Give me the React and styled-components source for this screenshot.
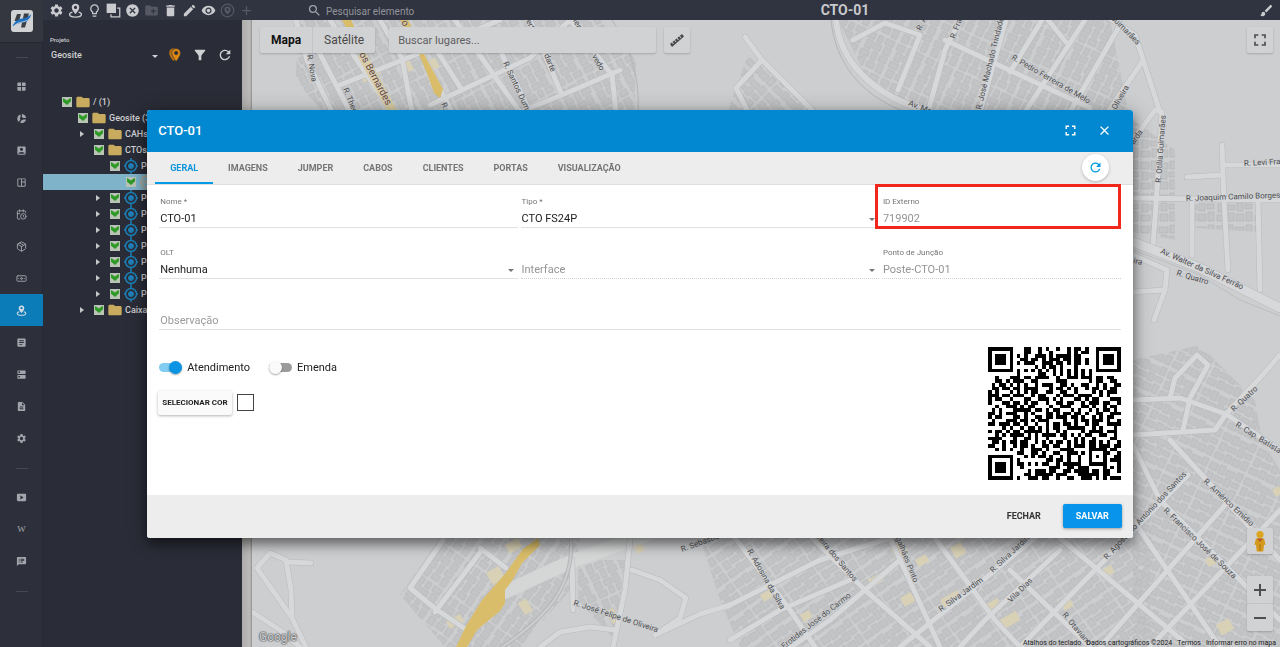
import React, { useState } from 'react'
import styled, { createGlobalStyle, css } from 'styled-components'
import {
  MdSettings,
  MdLightbulbOutline,
  MdCancel,
  MdCreateNewFolder,
  MdDelete,
  MdEdit,
  MdVisibility,
  MdAdd,
  MdSearch,
  MdBrush,
  MdWindow,
  MdAccountBox,
  MdOutlineSpaceDashboard,
  MdArticle,
  MdDns,
  MdDescription,
  MdSmartDisplay,
  MdSpeakerNotes,
  MdFilterAlt,
  MdRefresh,
  MdFullscreen,
  MdClose,
  MdFolder,
} from 'react-icons/md'
import { LuCalendarClock, LuPackage, LuBanknote } from 'react-icons/lu'

const GlobalStyle = createGlobalStyle`
  * {
    box-sizing: border-box;
  }
  body {
    margin: 0;
    background: #2b2d38;
    font-family: Roboto, "Liberation Sans", sans-serif;
  }
  button, input, select {
    font-family: inherit;
    margin: 0;
  }
  button {
    border: 0;
    padding: 0;
    background: none;
    color: inherit;
    cursor: pointer;
  }
`

/* ---------- icons ---------- */

const PinAreaIcon = ({ size = 15 }) => (
  <svg width={size} height={size} viewBox='0 0 24 24' fill='currentColor'>
    <path
      fillRule='evenodd'
      d='M12 1a6 6 0 0 0-6 6c0 4.300 6 10.500 6 10.500S18 11.300 18 7a6 6 0 0 0-6-6zm0 3.500a2.500 2.500 0 1 1 0 5 2.500 2.500 0 0 1 0-5z'
    />
    <path
      d='M7 14.500c-3 .8-4.500 2-4.500 3.500C2.500 20.500 6.500 22.500 12 22.500s9.500-2 9.500-4.500c0-1.500-1.500-2.700-4.500-3.500'
      fill='none'
      stroke='currentColor'
      strokeWidth='2.200'
    />
  </svg>
)

const CopyIcon = () => (
  <svg width='15' height='15' viewBox='0 0 24 24' fill='currentColor'>
    <path d='M1 1h15v15H1z' />
    <path d='M18 7h5v16H7v-5h2v3h12V9h-3z' />
  </svg>
)

const TargetPinIcon = () => (
  <svg width='15' height='15' viewBox='0 0 24 24'>
    <circle cx='12' cy='12' r='10' fill='none' stroke='currentColor' strokeWidth='2' />
    <path
      fill='currentColor'
      fillRule='evenodd'
      d='M12 5.500a5 5 0 0 0-5 5c0 3.500 5 8 5 8s5-4.500 5-8a5 5 0 0 0-5-5zm0 3a2 2 0 1 1 0 4 2 2 0 0 1 0-4z'
    />
  </svg>
)

const PieIcon = () => (
  <svg width='11' height='11' viewBox='0 0 24 24' fill='currentColor'>
    <path d='M10 3v6.500a3 3 0 0 0-.5 4.800L6 19.500A9.500 9.500 0 0 1 10 3z' />
    <path d='M13 2a10 10 0 0 1 9 9h-6.500A3.500 3.500 0 0 0 13 8.500z' />
    <path d='M15.500 14H22a9.500 9.500 0 0 1-13 7l3.500-5.500a3.500 3.500 0 0 0 3-1.500z' />
  </svg>
)

const Logo = () => (
  <svg width='22' height='22' viewBox='0 0 22 22'>
    <rect width='22' height='22' rx='3' fill='#d2d3d5' />
    <path d='M6 4h4l-2 7H3.500z M13 3.500h5l-4 14h-4z' fill='#3c4047' />
    <path d='M1.500 16.500c2-5 5-7.500 10-8 4-.5 6.500-2 8.500-4.500-.5 5-3.500 8-8 8.500-4 .5-7.500 1.500-10.500 4z' fill='#1d6fc0' />
    <path d='M2 17c3-3.500 6-4.700 10-5.200 3.500-.5 5.500-1.800 7-3.800' fill='none' stroke='#d2d3d5' strokeWidth='.8' />
  </svg>
)

const OrangePins = () => (
  <svg width='14' height='14' viewBox='0 0 24 24'>
    <path d='M9 1C4.500 1 2 4.500 2 8.500 2 14 9 22 9 22l3-1-4-8V5l4-4z' fill='#b86f14' />
    <path
      fillRule='evenodd'
      fill='#e08a14'
      stroke='#2a2c37'
      d='M14 1a7.500 7.500 0 0 0-7.500 7.500C6.500 14 14 23 14 23s7.500-9 7.500-14.500A7.500 7.500 0 0 0 14 1zm0 4.500a3 3 0 1 1 0 6 3 3 0 0 1 0-6z'
    />
  </svg>
)

const PoleIcon = () => (
  <svg width='16' height='16' viewBox='0 0 16 16' stroke='#1d7fb5' fill='none'>
    <path d='M8 0v3M8 13v3M1 8h2M13 8h2' strokeWidth='1.500' />
    <circle cx='8' cy='8' r='5.500' strokeWidth='1.500' />
    <circle cx='8' cy='8' r='2.500' fill='#1d7fb5' />
  </svg>
)

const BoxIcon = () => (
  <svg width='16' height='16' viewBox='0 0 16 16' fill='none' stroke='#b9a58c'>
    <circle cx='8' cy='8' r='6' strokeWidth='1.500' />
    <path d='M4 8h8' strokeWidth='1.500' />
  </svg>
)

const RulerIcon = () => (
  <svg width='16' height='16' viewBox='0 0 16 16'>
    <path d='M1 12 13 2l2 2.500L3 15z' fill='#4a4a4a' />
    <path d='M3 10l1.500 2M5.500 8 7 10M8 6l1.500 2M10.500 4 12 6' stroke='#cfd0d1' />
  </svg>
)

const ZoomInIcon = () => (
  <svg width='12' height='12' viewBox='0 0 12 12' stroke='currentColor' strokeWidth='2'>
    <path d='M0 6h12M6 0v12' />
  </svg>
)

const ZoomOutIcon = () => (
  <svg width='12' height='12' viewBox='0 0 12 12' stroke='currentColor' strokeWidth='2'>
    <path d='M0 6h12' />
  </svg>
)

const Pegman = () => (
  <svg width='12' height='22' viewBox='0 0 12 22'>
    <path d='M2 8.500h8l1.500 6-1.500.5-.8 6.500H2.800L2 15l-1.500-.5z' fill='#d59a1c' />
    <path d='M3 8.500h6L6 12z' fill='#b5532a' />
    <circle cx='6' cy='4.500' r='3.600' fill='#dba520' />
    <path d='M6 14v7' stroke='#a87412' />
  </svg>
)

/* ---------- QR code ---------- */

const QR_ROWS = [
  '#######...##..#.#..#..#.##.#..#######',
  '#.....#...##..#..#....#.#.##..#.....#',
  '#.###.#.#.#..###.#.####.##....#.###.#',
  '#.###.#..##.##.#.###.##.##.#..#.###.#',
  '#.###.#.#.###..###.##.#.##.#..#.###.#',
  '#.....#......#.#.##.#...#.....#.....#',
  '#######.#.#.#.#.#.#.#.#.#.#.#.#######',
  '........#.....##..#.#.#.#.#.#........',
  '..#...###.##.####..#..###.###.##.##..',
  '..##.#.###..##.....###......#.##..##.',
  '.#.##.#.#.#..#.###..##.#..##..#.#..##',
  '.##.##.##.####...#.##.#.#..#.##.#.##.',
  '#.#...#.#.#.##..##..##..#....#.#.###.',
  '###.##.###..#.##...#.###.####..#.#...',
  '#.##..#...##..###.#.#...##.#.##...###',
  '#...##.##.#.##..#..##.##..#.###.##..#',
  '..#..###.#.##....#..###...##.#..#.##.',
  '.#.#...#####.##.#.##...#.#..#.#.##.#.',
  '##.#.###..#.#...##.#.##.##.#..##..###',
  '#.##...##.#..##.##.###.##.#..#.#.##..',
  '.#...###.##.#.###....#..#.##.###.#..#',
  '##.###.##.#..#..#.##.##.#..#.##..####',
  '....#.#..#.##.#.#.##..#####..#.#...#.',
  '#.##.#.##.#####.#..#.#....#.####.###.',
  '..#.#.####.#.#.####.##.#.#.##..##..#.',
  '####...#..##.#..#....#..#.#..#....##.',
  '.##.#.##.##..#.#.#.##.#.#.#.##.#.#..#',
  '##..#..#.##.#..##.##..#.###.##.###.##',
  '..#.#.#..#..###.#...####....#####.##.',
  '........##..##.#..##..###.#.#...##..#',
  '#######...#.#.##.#..#.#..#..#.#.#..##',
  '#.....#.#.......##.##.#..#..#...#.###',
  '#.###.#.##.#.#.##..#.#####..#####...#',
  '#.###.#..#.......###..##.###....#.#.#',
  '#.###.#....#.###.##..##.####.##.##..#',
  '#.....#...##.#####.###...######.##...',
  '#######.#..###.##..#..##..###.#.#.###',
]

const QrCode = () => (
  <QrSvg viewBox='0 0 37 37' shapeRendering='crispEdges' role='img' aria-label='QR code'>
    {QR_ROWS.map((row, y) =>
      row.split('').map((cell, x) => cell === '#' && <rect key={`${x}-${y}`} x={x} y={y} width='1' height='1' />)
    )}
  </QrSvg>
)

/* ---------- map ---------- */

const DISTRICTS = [
  { angle: 62, points: '300,20 600,20 636,60 634,120 330,120 295,80' },
  { angle: -65, points: '838,20 1110,20 1130,120 935,120 870,84' },
  { angle: 45, points: '748,55 830,120 725,120 735,90' },
  { angle: 0, points: '1133,120 1175,150 1175,240 1133,232' },
  { angle: 0, points: '1195,203 1256,203 1258,232 1195,228' },
  { angle: 25, points: '1133,360 1200,345 1255,400 1262,440 1280,470 1280,647 1133,647' },
  { angle: -55, points: '440,538 580,538 570,590 520,647 445,647 400,595' },
  { angle: -35, points: '700,538 1150,538 1150,647 740,647 720,600' },
  { angle: 65, points: '578,560 625,560 615,640 578,600' },
]

const ROADS = [
  'M296 20 307 60 332 112',
  'M318 50 350 112',
  'M330 20 392 112',
  'M380 20 402 58 412 112',
  'M404 20 446 100 452 112',
  'M430 40 462 90',
  'M340 85 420 53 500 20',
  'M430 105 530 58 570 20',
  'M455 20 520 112',
  'M500 50 530 112',
  'M530 20 562 95 620 70',
  'M570 20 612 75 616 112',
  'M562 95 520 112',
  'M853 40 885 23 920 35 898 90',
  'M745 37 762 60 814 112',
  'M762 60 736 88 748 112',
  'M960 20 945 50 928 112',
  'M1006 20 980 112',
  'M945 40 1090 108',
  'M1042 20 1010 72',
  'M1085 20 1025 112',
  'M1120 25 1070 112',
  'M1048 20 1066 42',
  'M1100 12 1135 35 1160 112',
  'M1142 62 1108 112',
  'M1133 140 1155 110 1162 112 1156 205 1153 245',
  'M1222 145 1224 200 1228 270',
  'M1187 177 1222 175',
  'M1225 165 1280 165',
  'M1133 198 1280 200',
  'M1192 200 1192 255',
  'M1258 200 1260 290',
  'M1133 255 1167 270 1165 290 1154 320',
  'M1133 292 1165 290',
  'M1133 400 1180 398 1226 414 1280 450',
  'M1170 398 1175 378 1197 355 1208 365 1190 398 1183 430',
  'M1133 435 1215 430 1226 414 1258 380 1280 355',
  'M1133 445 1160 500 1280 620',
  'M1170 440 1280 560',
  'M1188 475 1090 575 1020 647',
  'M1225 505 1100 647',
  'M1280 510 1150 647',
  'M1060 538 1190 647',
  'M1133 520 1220 647',
  'M1035 538 940 615 900 647',
  'M1060 550 985 620 960 647',
  'M890 538 940 647',
  'M935 538 995 620 1020 647',
  'M1010 570 1090 647',
  'M812 538 865 590 930 647',
  'M735 538 790 610 815 647',
  'M730 605 820 560 890 538',
  'M900 560 830 620 780 655',
  'M730 640 780 610 850 580',
  'M443 540 410 588 437 610 470 632',
  'M482 550 435 612',
  'M480 548 506 568',
  'M630 540 625 590 613 647',
  'M632 570 660 580 686 598 680 618 655 635',
  'M655 635 700 614 730 605',
  'M540 647 560 632 590 627 615 630',
  'M572 560 573 610',
  'M257 568 270 553 286 560 291 590 292 618 306 647',
  'M257 568 290 615',
  'M288 562 311 563',
  'M252 612 280 630 300 647',
]

const YELLOW_LOTS = [
  [360, 76, 20, 8], [402, 60, 6, 14], [427, 62, 9, 10], [505, 545, 14, 10], [486, 573, 14, 14],
  [518, 603, 9, 14], [606, 612, 8, 14], [446, 622, 16, 8], [634, 547, 8, 8], [890, 548, 14, 14],
  [915, 560, 12, 8], [950, 548, 12, 12], [868, 580, 12, 8], [940, 600, 20, 10], [985, 605, 14, 12],
  [1000, 620, 18, 10], [1060, 602, 10, 10], [1102, 570, 10, 8], [1205, 560, 10, 8], [1216, 625, 14, 12],
  [800, 615, 10, 8], [760, 595, 10, 8], [900, 598, 12, 10], [1272, 490, 8, 8],
]

const LABELS = [
  [307, 55, 80, 'R. Nova'],
  [343, 89, 68, 'R. Theo'],
  [503, 63, 65, 'R. Santos Dumont'],
  [544, 55, 68, 'darte'],
  [592, 56, 62, 'vedo'],
  [526, 21, 65, 'ert'],
  [573, 20, 65, 'ter'],
  [441, 104, 65, 'R. Ipê'],
  [921, 31, -65, 'R. A'],
  [955, 39, -70, 'R. Franco'],
  [981, 110, -76, 'R. José Machado Trindade'],
  [1011, 59, 30, 'R. Pedro Ferreira de Melo'],
  [1110, 18, 45, 'Guimarães'],
  [1116, 110, -60, 'Oliveira'],
  [908, 105, 22, 'Av. Manoel'],
  [1134, 145, -55, 'arda'],
  [1161, 183, -86, 'R. Otília Guimarães'],
  [1244, 166, -3, 'R. Levi Franco'],
  [1186, 201, -2, 'R. Joaquim Camilo Borges'],
  [1160, 253, 24, 'Av. Walter da Silva Ferrão'],
  [1133, 263, 12, 'ira'],
  [1176, 275, 17, 'R. Quatro'],
  [1234, 412, -43, 'R. Quatro'],
  [1235, 426, 32, 'R. Cap. Batista'],
  [1203, 482, 43, 'R. Américo Emídio'],
  [1163, 511, 44, 'R. Francisco José de Souza'],
  [1107, 560, -47, 'R. Agostinho Antônio dos Santos'],
  [993, 573, -43, 'R. Silva Jardim'],
  [941, 612, -36, 'R. Silva Jardim'],
  [1011, 603, -45, 'Vila Dias'],
  [1062, 615, 50, 'R. Otaviano'],
  [894, 534, 68, 'agalhães Pinto'],
  [815, 536, 50, 'rreira dos Santos'],
  [747, 551, 60, 'R. Adosina da Silva'],
  [784, 649, -38, 'Erotides José do Carmo'],
  [682, 552, -20, 'R. Sebastião'],
  [573, 605, 18, 'R. José Felipe de Oliveira'],
]

const MapDrawing = () => (
  <MapSvg viewBox='252 20 1028 627' preserveAspectRatio='xMinYMin slice' aria-hidden='true'>
    <defs>
      {DISTRICTS.map(({ angle }, i) => (
        <pattern
          key={i}
          id={`lots-${i}`}
          width='38'
          height='32'
          patternUnits='userSpaceOnUse'
          patternTransform={`rotate(${angle})`}
        >
          <g fill='#c3c4c6' stroke='#b3b4b7' strokeWidth='.7'>
            <path d='M1 2h8v7H1zM11 1h6v9h-6zM19 3h9v6h-9zM30 1h6v8h-6z' />
            <path d='M2 12h6v8H2zM10 13h9v5h-9zM21 11h6v8h-6zM29 12h7v5h-7z' />
            <path d='M1 23h9v6H1zM12 21h6v8h-6zM20 22h8v7h-8zM30 20h6v9h-6z' />
          </g>
        </pattern>
      ))}
    </defs>
    <rect x='252' y='20' width='1028' height='627' fill='#cdced0' />
    {DISTRICTS.map(({ points }, i) => (
      <polygon key={i} points={points} fill={`url(#lots-${i})`} />
    ))}
    {YELLOW_LOTS.map(([x, y, w, h], i) => (
      <rect key={i} x={x} y={y} width={w} height={h} fill='#d9d1b6' transform={`rotate(-30 ${x} ${y})`} />
    ))}
    <g fill='none' strokeLinejoin='round' strokeLinecap='round'>
      <path d='M505 592 570 562 660 530' stroke='#d5d6d6' strokeWidth='14' />
      {ROADS.map((d) => (
        <path key={d} d={d} stroke='#b9babd' strokeWidth='6' />
      ))}
      {ROADS.map((d) => (
        <path key={d} d={d} stroke='#d7d8da' strokeWidth='5' />
      ))}
      <path d='M1133 242 1200 268 1280 308' stroke='#b9babd' strokeWidth='10' />
      <path d='M1133 242 1200 268 1280 308' stroke='#d7d8da' strokeWidth='9' />
      <path d='M1133 250 1200 275 1240 300 1280 316' stroke='#bdbec1' />
      <path d='M836 20C840 60 870 95 930 112' stroke='#b9babd' strokeWidth='7' />
      <path d='M836 20C840 60 870 95 930 112' stroke='#d7d8da' strokeWidth='6' />
      <path d='M831 20C835 62 860 95 905 112M612 20C632 50 640 80 638 112' stroke='#b4b5b8' />
      <path d='M571 538C574 585 550 615 502 647' stroke='#b4b5b8' strokeWidth='4' />
      <path d='M571 538C574 585 550 615 502 647' stroke='#cdced0' strokeWidth='2' />
    </g>
    <g fill='#d9bd6a'>
      <path d='M342 20h9l4 8-6 5z' />
      <path d='M400 20h8l7 12-6 3z' />
      <path d='M419 54 424 54 438 80 443 89 440 98 434 93 428 76z' />
      <path d='M538 538 523 549 505 574 482 600 466 626 456 647 467 647 477 630 500 611 505 603 505 590 512 581 522 563 540 545z' />
    </g>
    <path d='M362 55 396 118' stroke='#d8cda4' strokeWidth='9' />
    <MajorLabel x='359' y='54' transform='rotate(62 359 54)'>os Bernardes</MajorLabel>
    <MajorLabel x='401' y='22' transform='rotate(62 401 22)'>o Pro</MajorLabel>
    {LABELS.map(([x, y, angle, text], i) => (
      <StreetLabel key={i} x={x} y={y} transform={`rotate(${angle} ${x} ${y})`}>
        {text}
      </StreetLabel>
    ))}
  </MapSvg>
)

/* ---------- page data ---------- */

const TOOLS = [
  { name: 'Configurar', icon: <MdSettings /> },
  { name: 'Adicionar ponto', icon: <PinAreaIcon /> },
  { name: 'Dica', icon: <MdLightbulbOutline /> },
  { name: 'Copiar', icon: <CopyIcon /> },
  { name: 'Cancelar', icon: <MdCancel /> },
  { name: 'Nova pasta', icon: <MdCreateNewFolder />, dim: true },
  { name: 'Excluir', icon: <MdDelete /> },
  { name: 'Editar', icon: <MdEdit /> },
  { name: 'Visualizar', icon: <MdVisibility /> },
  { name: 'Centralizar', icon: <TargetPinIcon />, dim: true },
  { name: 'Adicionar', icon: <MdAdd />, dim: true },
]

const WikiMark = styled.span`
  font-family: 'Liberation Serif', serif;
  font-size: 9px;
`

const MENU = [
  [
    { name: 'Painel', icon: <MdWindow /> },
    { name: 'Relatórios', icon: <PieIcon /> },
    { name: 'Clientes', icon: <MdAccountBox /> },
    { name: 'Quadros', icon: <MdOutlineSpaceDashboard /> },
    { name: 'Agenda', icon: <LuCalendarClock /> },
    { name: 'Estoque', icon: <LuPackage /> },
    { name: 'Financeiro', icon: <LuBanknote /> },
    { name: 'Mapeamento', icon: <PinAreaIcon size={11} />, active: true },
    { name: 'Listas', icon: <MdArticle /> },
    { name: 'Rede', icon: <MdDns /> },
    { name: 'Documentos', icon: <MdDescription /> },
    { name: 'Configurações', icon: <MdSettings /> },
  ],
  [
    { name: 'Vídeos', icon: <MdSmartDisplay /> },
    { name: 'Wiki', icon: <WikiMark>W</WikiMark> },
    { name: 'Suporte', icon: <MdSpeakerNotes /> },
  ],
]

const pole = { level: 3, icon: 'pole', label: 'Poste', arrow: true }

const TREE = [
  { level: 0, icon: 'folder', label: '/ (1)' },
  { level: 1, icon: 'folder', label: 'Geosite (3)' },
  { level: 2, icon: 'folder', label: 'CAHs', arrow: true },
  { level: 2, icon: 'folder', label: 'CTOs' },
  { ...pole, arrow: false },
  { level: 4, icon: 'box', label: 'CTO-01', selected: true },
  pole,
  pole,
  pole,
  pole,
  pole,
  pole,
  pole,
  { level: 2, icon: 'folder', label: 'Caixas', arrow: true },
]

const TREE_ICONS = {
  folder: <MdFolder size={16} color='#c9ab5f' />,
  pole: <PoleIcon />,
  box: <BoxIcon />,
}

const TABS = ['Geral', 'Imagens', 'Jumper', 'Cabos', 'Clientes', 'Portas', 'Visualização']

/* ---------- components ---------- */

const SideMenu = () => (
  <Side>
    <LogoBox>
      <Logo />
    </LogoBox>
    {MENU.map((group, i) => (
      <React.Fragment key={i}>
        <MenuDivider />
        {group.map(({ name, icon, active }) => (
          <MenuItem key={name} href='#' aria-label={name} $active={active}>
            {icon}
          </MenuItem>
        ))}
      </React.Fragment>
    ))}
    <MenuDivider />
  </Side>
)

const TopBar = () => (
  <Bar>
    {TOOLS.map(({ name, icon, dim }) => (
      <ToolButton key={name} aria-label={name} $dim={dim}>
        {icon}
      </ToolButton>
    ))}
    <ElementSearch>
      <MdSearch size={15} />
      <input placeholder='Pesquisar elemento' aria-label='Pesquisar elemento' />
    </ElementSearch>
    <BarTitle>CTO-01</BarTitle>
    <ToolButton aria-label='Limpar'>
      <MdBrush />
    </ToolButton>
  </Bar>
)

const ProjectPanel = () => (
  <Panel>
    <ProjectLabel htmlFor='project'>Projeto</ProjectLabel>
    <ProjectRow>
      <SelectBox $light>
        <ProjectSelect id='project'>
          <option>Geosite</option>
        </ProjectSelect>
      </SelectBox>
      <PanelButton aria-label='Marcadores'>
        <OrangePins />
      </PanelButton>
      <PanelButton aria-label='Filtrar'>
        <MdFilterAlt />
      </PanelButton>
      <PanelButton aria-label='Atualizar árvore'>
        <MdRefresh />
      </PanelButton>
    </ProjectRow>
    <Tree>
      {TREE.map(({ level, icon, label, arrow, selected }, i) => (
        <TreeRow key={i} $level={level} $selected={selected}>
          <Arrow $open={arrow} />
          <TreeCheck type='checkbox' defaultChecked aria-label={label} />
          {TREE_ICONS[icon]}
          <span>{label}</span>
        </TreeRow>
      ))}
    </Tree>
  </Panel>
)

const MapView = () => (
  <MapArea>
    <MapDrawing />
    <MapTop>
      <MapTypes>
        <MapType $active>Mapa</MapType>
        <MapType>Satélite</MapType>
      </MapTypes>
      <PlaceSearch placeholder='Buscar lugares...' aria-label='Buscar lugares' />
      <MapButton aria-label='Medir'>
        <RulerIcon />
      </MapButton>
      <Spacer />
      <MapButton aria-label='Tela cheia'>
        <MdFullscreen size={20} />
      </MapButton>
    </MapTop>
    <MapControls>
      <MapButton aria-label='Street View'>
        <Pegman />
      </MapButton>
      <ZoomGroup>
        <MapButton aria-label='Aumentar zoom'>
          <ZoomInIcon />
        </MapButton>
        <MapButton aria-label='Diminuir zoom'>
          <ZoomOutIcon />
        </MapButton>
      </ZoomGroup>
    </MapControls>
    <GoogleMark>Google</GoogleMark>
    <Credits>
      <button>Atalhos do teclado</button>
      <span>Dados cartográficos ©2024</span>
      <a href='#'>Termos</a>
      <a href='#'>Informar erro no mapa</a>
    </Credits>
  </MapArea>
)

const ElementDialog = () => {
  const [tab, setTab] = useState('Geral')

  return (
    <Overlay>
      <Dialog role='dialog' aria-labelledby='dialog-title'>
        <DialogHeader>
          <h2 id='dialog-title'>CTO-01</h2>
          <HeaderButton aria-label='Maximizar'>
            <MdFullscreen size={17} />
          </HeaderButton>
          <HeaderButton aria-label='Fechar'>
            <MdClose size={15} />
          </HeaderButton>
        </DialogHeader>
        <TabBar role='tablist'>
          {TABS.map((name) => (
            <Tab key={name} role='tab' aria-selected={tab === name} $active={tab === name} onClick={() => setTab(name)}>
              {name}
            </Tab>
          ))}
          <RoundButton aria-label='Recarregar'>
            <MdRefresh size={15} />
          </RoundButton>
        </TabBar>
        <Body>
          <Fields>
            <Field>
              <label htmlFor='name'>Nome *</label>
              <TextInput id='name' defaultValue='CTO-01' />
            </Field>
            <Field>
              <label htmlFor='type'>Tipo *</label>
              <SelectBox>
                <Select id='type'>
                  <option>CTO FS24P</option>
                </Select>
              </SelectBox>
            </Field>
            <Field $highlight>
              <label htmlFor='external'>ID Externo</label>
              <TextInput id='external' defaultValue='719902' disabled />
            </Field>
            <Field>
              <label htmlFor='olt'>OLT</label>
              <SelectBox>
                <Select id='olt'>
                  <option>Nenhuma</option>
                </Select>
              </SelectBox>
            </Field>
            <Field>
              <SelectBox>
                <Select aria-label='Interface' disabled>
                  <option>Interface</option>
                </Select>
              </SelectBox>
            </Field>
            <Field>
              <label htmlFor='junction'>Ponto de Junção</label>
              <TextInput id='junction' defaultValue='Poste-CTO-01' disabled />
            </Field>
            <Field $wide>
              <TextInput placeholder='Observação' aria-label='Observação' />
            </Field>
          </Fields>
          <Bottom>
            <Options>
              <Switches>
                <SwitchLabel>
                  <Switch type='checkbox' defaultChecked />
                  Atendimento
                </SwitchLabel>
                <SwitchLabel>
                  <Switch type='checkbox' />
                  Emenda
                </SwitchLabel>
              </Switches>
              <ColorRow>
                <ColorButton>Selecionar cor</ColorButton>
                <ColorSwatch />
              </ColorRow>
            </Options>
            <QrCode />
          </Bottom>
        </Body>
        <DialogFooter>
          <FooterButton>Fechar</FooterButton>
          <FooterButton $primary>Salvar</FooterButton>
        </DialogFooter>
      </Dialog>
    </Overlay>
  )
}

const App = () => (
  <Page>
    <GlobalStyle />
    <SideMenu />
    <Main>
      <TopBar />
      <Workspace>
        <ProjectPanel />
        <Splitter />
        <MapView />
      </Workspace>
    </Main>
    <ElementDialog />
  </Page>
)

/* ---------- styles ---------- */

const Page = styled.div`
  display: flex;
  height: 100vh;
  overflow: hidden;
`

const Side = styled.nav`
  display: flex;
  flex-direction: column;
  flex: 0 0 43px;
  background: #2d303b;
  box-shadow: inset -1px 0 #262833;
`

const LogoBox = styled.div`
  display: flex;
  align-items: center;
  justify-content: center;
  height: 43px;
  background: #353740;
  border-bottom: 1px solid #24262f;
`

const MenuDivider = styled.hr`
  width: 12px;
  height: 1px;
  margin: 14px auto 12px;
  border: 0;
  background: #454854;
`

const MenuItem = styled.a`
  display: flex;
  align-items: center;
  justify-content: center;
  height: 32px;
  font-size: 11px;
  color: ${({ $active }) => ($active ? '#d5dde3' : '#a3a5ac')};
  background: ${({ $active }) => ($active ? '#0c7cb8' : 'transparent')};
  text-decoration: none;
`

const Main = styled.div`
  display: flex;
  flex-direction: column;
  flex: 1;
  min-width: 0;
`

const Bar = styled.header`
  display: flex;
  align-items: center;
  height: 20px;
  padding: 0 4px;
  background: #303340;
  color: #c9cacd;
`

const ToolButton = styled.button`
  display: flex;
  align-items: center;
  justify-content: center;
  width: 19px;
  height: 20px;
  font-size: 15px;
  opacity: ${({ $dim }) => ($dim ? 0.25 : 1)};
`

const ElementSearch = styled.label`
  display: flex;
  align-items: center;
  gap: 4px;
  width: 126px;
  margin-left: 51px;
  color: #a2a4aa;

  input {
    flex: 1;
    min-width: 0;
    padding: 2px 0 0;
    border: 0;
    outline: 0;
    background: none;
    color: inherit;
    font-size: 10px;
  }
  input::placeholder {
    color: #92949b;
  }
`

const BarTitle = styled.h1`
  flex: 1;
  margin: 0;
  font-size: 14px;
  font-weight: 700;
  line-height: 20px;
  text-align: center;
`

const Workspace = styled.div`
  display: flex;
  flex: 1;
  min-height: 0;
`

const Panel = styled.aside`
  flex: 0 0 199px;
  padding-top: 15px;
  overflow: hidden;
  background: #2a2c37;
  color: #cfd0d3;
`

const ProjectLabel = styled.label`
  display: block;
  padding-left: 7px;
  font-size: 6px;
  font-weight: 500;
  line-height: 9px;
`

const ProjectRow = styled.div`
  display: flex;
  align-items: center;
  height: 22px;
  padding: 0 5px 0 8px;
`

const SelectBox = styled.div`
  position: relative;
  flex: 1;

  &::after {
    content: '';
    position: absolute;
    right: 4px;
    top: 50%;
    border: 3px solid transparent;
    border-top-color: ${({ $light }) => ($light ? '#cfd0d3' : '#757575')};
    border-bottom: 0;
    pointer-events: none;
  }
`

const ProjectSelect = styled.select`
  display: block;
  width: 100%;
  height: 14px;
  padding: 0;
  border: 0;
  outline: 0;
  appearance: none;
  background: none;
  color: inherit;
  font-size: 9px;
  font-weight: 500;
`

const PanelButton = styled.button`
  display: flex;
  align-items: center;
  justify-content: center;
  width: 25px;
  font-size: 16px;
`

const Tree = styled.ul`
  margin: 28px 0 0;
  padding: 0;
  list-style: none;
`

const TreeRow = styled.li`
  display: flex;
  align-items: center;
  gap: 2px;
  height: 16px;
  padding-left: ${({ $level }) => 5 + $level * 16}px;
  font-size: 9px;
  font-weight: 500;
  white-space: nowrap;
  background: ${({ $selected }) => ($selected ? '#7fb3c9' : 'transparent')};

  svg {
    flex-shrink: 0;
  }
`

const Arrow = styled.span`
  flex: 0 0 4px;
  margin-right: 8px;
  border: 3px solid transparent;
  border-right: 0;
  border-left-width: 4px;
  border-left-color: ${({ $open }) => ($open ? '#c5c6c9' : 'transparent')};
`

const TreeCheck = styled.input`
  display: flex;
  flex-shrink: 0;
  width: 10px;
  height: 10px;
  margin: 0 1px 0 0;
  appearance: none;
  background: #b9c4b6;

  &:checked::before {
    content: '';
    width: 8px;
    height: 7px;
    margin: 1px;
    background: #2f9a26;
    clip-path: polygon(0 0, 30% 20%, 50% 35%, 75% 15%, 100% 0, 100% 45%, 50% 100%, 0 55%);
  }
`

const Splitter = styled.div`
  flex: 0 0 10px;
  background: linear-gradient(90deg, #aeadab, #bcbbb9 80%, #8f8f90);
`

const MapArea = styled.main`
  position: relative;
  flex: 1;
  min-width: 0;
  overflow: hidden;
  background: #cdced0;
`

const MapSvg = styled.svg`
  position: absolute;
  inset: 0;
  width: 100%;
  height: 100%;
`

const StreetLabel = styled.text`
  font-size: 8px;
  fill: #4b4d50;
  stroke: #d2d3d5;
  stroke-width: 1px;
  paint-order: stroke;
`

const MajorLabel = styled(StreetLabel)`
  font-size: 10px;
  fill: #6b4423;
`

const MapTop = styled.div`
  position: relative;
  display: flex;
  align-items: center;
  gap: 8px;
  padding: 7px 7px 0 8px;
`

const MapTypes = styled.div`
  display: flex;
  margin-right: 6px;
  border-radius: 2px;
  background: #d1d2d3;
  box-shadow: 0 1px 2px rgba(0, 0, 0, 0.2);
`

const MapType = styled.button`
  height: 26px;
  padding: 0 11px;
  font-size: 12px;
  font-weight: ${({ $active }) => ($active ? 700 : 400)};
  color: ${({ $active }) => ($active ? '#111' : '#484848')};

  & + & {
    border-left: 1px solid #c3c4c5;
  }
`

const PlaceSearch = styled.input`
  width: 267px;
  height: 26px;
  padding: 0 9px;
  border: 0;
  border-radius: 2px;
  outline: 0;
  background: #d1d2d3;
  box-shadow: 0 1px 2px rgba(0, 0, 0, 0.2);
  font-size: 11px;

  &::placeholder {
    color: #5d5e5f;
  }
`

const Spacer = styled.div`
  flex: 1;
`

const MapButton = styled.button`
  display: flex;
  align-items: center;
  justify-content: center;
  width: 26px;
  height: 26px;
  border-radius: 2px;
  background: #d1d2d3;
  box-shadow: 0 1px 2px rgba(0, 0, 0, 0.2);
  color: #4d4e4f;
`

const MapControls = styled.div`
  position: absolute;
  right: 7px;
  bottom: 16px;
  display: flex;
  flex-direction: column;
  gap: 22px;
`

const ZoomGroup = styled.div`
  display: flex;
  flex-direction: column;
  gap: 1px;
  border-radius: 2px;
  background: #c2c3c4;
  box-shadow: 0 1px 2px rgba(0, 0, 0, 0.2);

  button {
    height: 27px;
    box-shadow: none;
  }
`

const GoogleMark = styled.span`
  position: absolute;
  left: 7px;
  bottom: 2px;
  font-size: 12px;
  line-height: 15px;
  color: #cdced0;
  text-shadow: 0 0 1px #55575a, 0 0 1px #55575a, 0 0 2px #55575a;
`

const Credits = styled.div`
  position: absolute;
  right: 4px;
  bottom: 0;
  display: flex;
  gap: 5px;
  font-size: 7px;
  line-height: 8px;
  color: #1c1c1c;

  button {
    font-size: 7px;
    line-height: 8px;
  }
  a {
    color: inherit;
    text-decoration: none;
  }
`

const Overlay = styled.div`
  position: fixed;
  inset: 0;
  display: flex;
  align-items: center;
  justify-content: center;
`

const Dialog = styled.section`
  width: 77%;
  border-radius: 3px;
  overflow: hidden;
  background: #fff;
  box-shadow: 0 6px 12px rgba(0, 0, 0, 0.4), 0 2px 20px rgba(0, 0, 0, 0.3);
  color: #212121;
`

const DialogHeader = styled.header`
  display: flex;
  align-items: center;
  height: 42px;
  padding: 0 11px;
  background: #0288d1;
  color: #fff;

  h2 {
    flex: 1;
    margin: 0;
    font-size: 13px;
    font-weight: 500;
  }
`

const HeaderButton = styled.button`
  display: flex;
  align-items: center;
  justify-content: center;
  width: 34px;
  height: 34px;
`

const TabBar = styled.div`
  display: flex;
  align-items: center;
  padding: 0 24px 0 8px;
  border-bottom: 1px solid #dedede;
  background: #ededed;
`

const Tab = styled.button`
  height: 32px;
  padding: 2px 15px 0;
  border-bottom: 2px solid ${({ $active }) => ($active ? '#039be5' : 'transparent')};
  font-size: 9px;
  font-weight: 700;
  text-transform: uppercase;
  color: ${({ $active }) => ($active ? '#0d96dc' : '#757575')};
`

const RoundButton = styled.button`
  display: flex;
  align-items: center;
  justify-content: center;
  width: 27px;
  height: 27px;
  margin-left: auto;
  border-radius: 50%;
  background: #fff;
  box-shadow: 0 1px 3px rgba(0, 0, 0, 0.25);
  color: #039be5;
`

const Body = styled.div`
  padding: 11px 12px 15px;
`

const Fields = styled.div`
  display: grid;
  grid-template-columns: 3fr 3fr 2fr;
  gap: 19px 3px;
`

const highlightFrame = css`
  &::after {
    content: '';
    position: absolute;
    inset: -12px 0 -1px -7px;
    border: 3px solid #f0271a;
    pointer-events: none;
  }
`

const Field = styled.div`
  position: relative;
  display: flex;
  flex-direction: column;
  justify-content: flex-end;
  min-height: 32px;
  grid-column: ${({ $wide }) => ($wide ? '1 / -1' : 'auto')};

  label {
    padding-left: 1px;
    font-size: 8px;
    line-height: 12px;
    color: #757575;
  }
  ${SelectBox} {
    flex: none;
  }
  ${({ $highlight }) => $highlight && highlightFrame}
`

const control = css`
  display: block;
  width: 100%;
  height: 20px;
  padding: 2px 1px 0;
  border: 0;
  border-bottom: 1px solid #e0e0e0;
  border-radius: 0;
  outline: 0;
  background: none;
  color: #212121;
  font-size: 11px;

  &::placeholder {
    color: #9a9a9a;
  }
  &:disabled {
    border-bottom-style: dotted;
    border-bottom-color: #cfcfcf;
    color: #949494;
    opacity: 1;
  }
`

const TextInput = styled.input`
  ${control}
`

const Select = styled.select`
  ${control}
  appearance: none;
`

const Bottom = styled.div`
  display: flex;
  justify-content: space-between;
  align-items: flex-start;
  margin-top: 17px;
`

const Options = styled.div`
  display: flex;
  flex-direction: column;
  gap: 16px;
  padding-top: 14px;
`

const Switches = styled.div`
  display: flex;
  gap: 19px;
`

const SwitchLabel = styled.label`
  display: flex;
  align-items: center;
  gap: 5px;
  font-size: 11px;
  line-height: 14px;
`

const Switch = styled.input`
  display: flex;
  align-items: center;
  width: 23px;
  height: 9px;
  margin: 0;
  appearance: none;
  border-radius: 5px;
  background: #9b9b9b;

  &::before {
    content: '';
    flex: 0 0 13px;
    height: 13px;
    border-radius: 50%;
    background: #fafafa;
    box-shadow: 0 1px 2px rgba(0, 0, 0, 0.35);
  }
  &:checked {
    justify-content: flex-end;
    background: #81cdf2;
  }
  &:checked::before {
    background: #0b94e4;
  }
`

const ColorRow = styled.div`
  display: flex;
  align-items: center;
  gap: 5px;
  margin-left: -1px;
`

const ColorButton = styled.button`
  height: 24px;
  padding: 0 4px;
  border-radius: 2px;
  background: #fafafa;
  box-shadow: 0 1px 3px rgba(0, 0, 0, 0.3);
  font-size: 8px;
  font-weight: 700;
  text-transform: uppercase;
`

const ColorSwatch = styled.span`
  width: 17px;
  height: 17px;
  border: 1px solid #444;
  background: #fff;
`

const QrSvg = styled.svg`
  width: 133px;
  height: 133px;
`

const DialogFooter = styled.footer`
  display: flex;
  align-items: center;
  justify-content: flex-end;
  gap: 9px;
  height: 43px;
  padding: 0 11px;
  background: #ededed;
`

const FooterButton = styled.button`
  height: 24px;
  padding: 0 13px;
  border-radius: 2px;
  font-size: 9px;
  font-weight: 700;
  text-transform: uppercase;
  background: ${({ $primary }) => ($primary ? '#0894ea' : 'transparent')};
  color: ${({ $primary }) => ($primary ? '#fff' : '#333')};
  box-shadow: ${({ $primary }) => ($primary ? '0 1px 3px rgba(0, 0, 0, 0.35)' : 'none')};
`

export default App
